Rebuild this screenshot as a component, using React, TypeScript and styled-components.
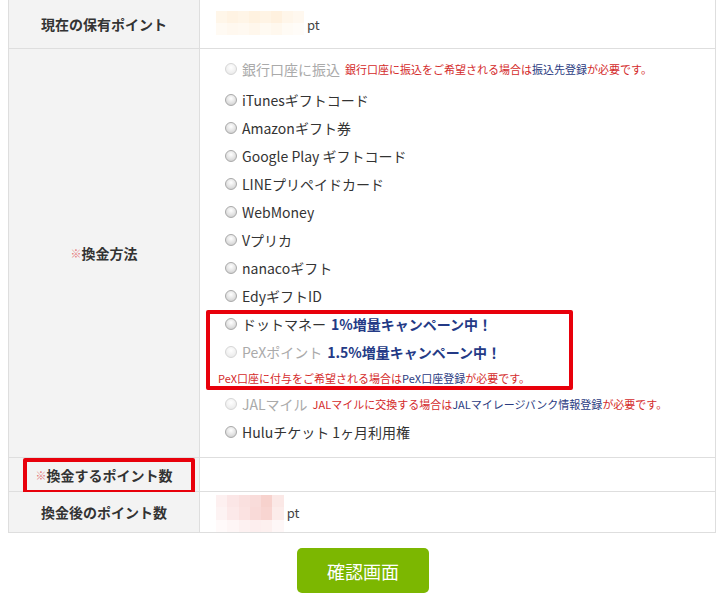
import styled, { createGlobalStyle } from "styled-components";

const GlobalStyle = createGlobalStyle`
  body {
    margin: 0 8px;
    background: #fff;
    font-family: "Noto Sans CJK JP", "Noto Sans", sans-serif;
    color: #333;
  }
`;

type Method = {
  label: string;
  disabled?: boolean;
  note?: React.ReactNode;
};

const topMethods: Method[] = [
  { label: "iTunesギフトコード" },
  { label: "Amazonギフト券" },
  { label: "Google Play ギフトコード" },
  { label: "LINEプリペイドカード" },
  { label: "WebMoney" },
  { label: "Vプリカ" },
  { label: "nanacoギフト" },
  { label: "EdyギフトID" },
];

// ぼかし（モザイク）部分の色
const creamCells = [
  "#fff6e9", "#fff3e3", "#fff5e7", "#fff2e0", "#fff4e5", "#fff1df", "#fff6ea", "#fff8ef",
  "#fffaf3", "#fff8ef", "#fff9f1", "#fff7ec", "#fffaf2", "#fff8ee", "#fffbf5", "#fffcf8",
];

const pinkCells = [
  "#fdf0f0", "#fbe6e6", "#fae0df", "#f9dcda", "#f7d2cd", "#fbe8e6",
  "#fdf3f3", "#fce9e9", "#fbe2e1", "#f9dad8", "#f8d5d1", "#fcecea",
  "#fffafa", "#fef6f6", "#fdf1f1", "#fdeeee", "#fdf0ef", "#fef7f7",
];

const App = () => {
  return (
    <>
      <GlobalStyle />
      <Table>
        <Row>
          <Head>現在の保有ポイント</Head>
          <Cell $height={48}>
            <Mosaic $cols={8} $cell={11} $rows={2}>
              {creamCells.map((c, i) => (
                <MosaicCell key={i} $color={c} />
              ))}
            </Mosaic>
            <Unit>pt</Unit>
          </Cell>
        </Row>

        <Row>
          <Head>
            <Mark>※</Mark>換金方法
          </Head>
          <MethodCell>
            <BankItem>
              <Radio $disabled />
              <ItemLabel $disabled>銀行口座に振込</ItemLabel>
              <Note>
                銀行口座に振込をご希望される場合は<NoteLink>振込先登録</NoteLink>が必要です。
              </Note>
            </BankItem>

            {topMethods.map((m) => (
              <Item key={m.label}>
                <Radio />
                <ItemLabel>{m.label}</ItemLabel>
              </Item>
            ))}

            <Highlight>
              <Item>
                <Radio />
                <ItemLabel>ドットマネー</ItemLabel>
                <Campaign>1%増量キャンペーン中！</Campaign>
              </Item>
              <Item $offset={0}>
                <Radio $disabled />
                <ItemLabel $disabled>PeXポイント</ItemLabel>
                <Campaign>1.5%増量キャンペーン中！</Campaign>
              </Item>
              <BlockNote>
                PeX口座に付与をご希望される場合は<NoteLink>PeX口座登録</NoteLink>が必要です。
              </BlockNote>
            </Highlight>

            <Item>
              <Radio $disabled />
              <ItemLabel $disabled>JALマイル</ItemLabel>
              <Note>
                JALマイルに交換する場合は<NoteLink>JALマイレージバンク情報登録</NoteLink>が必要です。
              </Note>
            </Item>
            <Item>
              <Radio />
              <ItemLabel>Huluチケット 1ヶ月利用権</ItemLabel>
            </Item>
          </MethodCell>
        </Row>

        <Row>
          <Head $marked>
            <Mark>※</Mark>換金するポイント数
          </Head>
          <Cell $height={33} />
        </Row>

        <Row>
          <Head>換金後のポイント数</Head>
          <Cell $height={40}>
            <Mosaic $cols={6} $cell={11.3} $rows={3} $bottom>
              {pinkCells.map((c, i) => (
                <MosaicCell key={i} $color={c} />
              ))}
            </Mosaic>
            <Unit>pt</Unit>
          </Cell>
        </Row>
      </Table>

      <Footer>
        <ConfirmButton type="button">確認画面</ConfirmButton>
      </Footer>
    </>
  );
};

export default App;

const Table = styled.div`
  width: 708px;
  margin-top: -1px;
  border: 1px solid #dedede;
  box-sizing: border-box;
`;

const Row = styled.div`
  display: flex;
  & + & {
    border-top: 1px solid #dedede;
  }
`;

const Head = styled.div<{ $marked?: boolean }>`
  position: relative;
  flex: 0 0 190px;
  display: flex;
  align-items: center;
  justify-content: center;
  background: #f3f3f3;
  border-right: 1px solid #dedede;
  font-size: 14px;
  font-weight: bold;
  color: #333;

  ${({ $marked }) =>
    $marked &&
    `
    &::after {
      content: "";
      position: absolute;
      left: 14px;
      right: 4px;
      top: 0;
      bottom: -3px;
      border: 4px solid #e8000b;
      border-radius: 2px;
      box-sizing: border-box;
    }
  `}
`;

const Mark = styled.span`
  color: #e57a7a;
  font-size: 11px;
  font-weight: normal;
`;

const Cell = styled.div<{ $height: number }>`
  flex: 1;
  display: flex;
  align-items: center;
  height: ${({ $height }) => $height}px;
  padding-left: 16px;
`;

const Mosaic = styled.div<{ $cols: number; $rows: number; $cell: number; $bottom?: boolean }>`
  display: grid;
  grid-template-columns: repeat(${({ $cols }) => $cols}, ${({ $cell }) => $cell}px);
  grid-template-rows: repeat(${({ $rows }) => $rows}, ${({ $cell }) => $cell + 1}px);
  align-self: ${({ $bottom }) => ($bottom ? "flex-end" : "center")};
  margin-top: ${({ $bottom }) => ($bottom ? "0" : "-2px")};
  filter: blur(0.6px);
`;

const MosaicCell = styled.span<{ $color: string }>`
  background: ${({ $color }) => $color};
`;

const Unit = styled.span`
  margin-left: 3px;
  font-size: 13px;
  color: #444;
`;

const MethodCell = styled.div`
  flex: 1;
  padding: 6px 0 11px 18px;
`;

const Item = styled.div<{ $offset?: number }>`
  display: flex;
  align-items: center;
  height: 28px;
  padding-left: 7px;
  white-space: nowrap;
`;

const BankItem = styled(Item)`
  margin-bottom: 3px;
`;

const Radio = styled.span<{ $disabled?: boolean }>`
  flex: 0 0 12px;
  width: 12px;
  height: 12px;
  border-radius: 50%;
  box-sizing: border-box;
  border: 1px solid ${({ $disabled }) => ($disabled ? "#d6d6d6" : "#a9a9a9")};
  background: ${({ $disabled }) =>
    $disabled
      ? "radial-gradient(circle at 50% 35%, #ffffff 0%, #f1f1f1 55%, #e4e4e4 100%)"
      : "radial-gradient(circle at 50% 35%, #ffffff 0%, #e2e2e2 55%, #c4c4c4 100%)"};
  margin-right: 5px;
  margin-top: -1px;
`;

const ItemLabel = styled.span<{ $disabled?: boolean }>`
  font-size: 14px;
  color: ${({ $disabled }) => ($disabled ? "#aaaaaa" : "#333")};
`;

const Note = styled.span`
  margin-left: 5px;
  font-size: 11px;
  color: #d42b2b;
`;

const NoteLink = styled.span`
  color: #2b3b7f;
`;

const Campaign = styled.span`
  margin-left: 5px;
  font-size: 14px;
  font-weight: bold;
  color: #243a86;
`;

const Highlight = styled.div`
  position: relative;

  &::after {
    content: "";
    position: absolute;
    left: -12px;
    top: 0;
    width: 367px;
    bottom: 0;
    border: 4px solid #e8000b;
    border-radius: 2px;
    box-sizing: border-box;
    pointer-events: none;
  }
`;

const BlockNote = styled.div`
  display: flex;
  align-items: center;
  height: 24px;
  font-size: 11px;
  color: #d42b2b;
  white-space: nowrap;
`;

const Footer = styled.div`
  display: flex;
  justify-content: center;
  padding: 15px 0 20px;
`;

const ConfirmButton = styled.button`
  width: 132px;
  height: 45px;
  border: none;
  border-radius: 5px;
  background: #7cb701;
  color: #fff;
  font-family: "Noto Sans CJK JP", sans-serif;
  font-size: 18px;
  cursor: pointer;
`;
